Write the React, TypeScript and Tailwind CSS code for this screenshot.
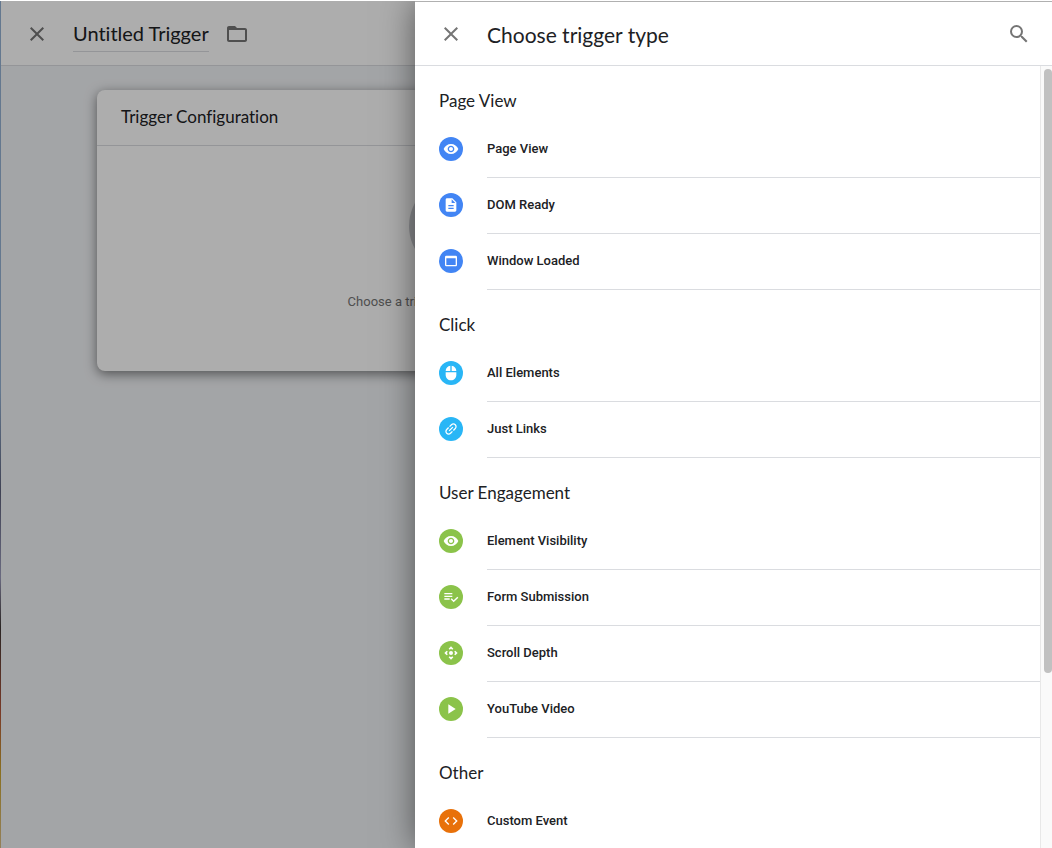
import type { ComponentType } from "react";
import {
  MdClose,
  MdCode,
  MdControlCamera,
  MdDescription,
  MdFolderOpen,
  MdLink,
  MdMouse,
  MdPlayArrow,
  MdSearch,
  MdVisibility,
  MdWebAsset,
} from "react-icons/md";

type Icon = ComponentType<{ className?: string }>;
type TriggerType = { label: string; icon: Icon; iconClass?: string };
type TriggerGroup = { title: string; color: string; items: TriggerType[] };

function FormCheckIcon({ className }: { className?: string }) {
  return (
    <svg viewBox="0 0 24 24" fill="currentColor" aria-hidden="true" className={className}>
      <path d="M14 10H2v2h12v-2zm0-4H2v2h12V6zM2 16h8v-2H2v2zm19.5-4.5L23 13l-6.99 7-4.51-4.5L13 14l3.01 3 5.49-5.5z" />
    </svg>
  );
}

const groups: TriggerGroup[] = [
  {
    title: "Page View",
    color: "bg-[#4285f4]",
    items: [
      { label: "Page View", icon: MdVisibility },
      { label: "DOM Ready", icon: MdDescription },
      { label: "Window Loaded", icon: MdWebAsset },
    ],
  },
  {
    title: "Click",
    color: "bg-[#29b6f6]",
    items: [
      { label: "All Elements", icon: MdMouse },
      { label: "Just Links", icon: MdLink, iconClass: "-rotate-45" },
    ],
  },
  {
    title: "User Engagement",
    color: "bg-[#8bc34a]",
    items: [
      { label: "Element Visibility", icon: MdVisibility },
      { label: "Form Submission", icon: FormCheckIcon },
      { label: "Scroll Depth", icon: MdControlCamera },
      { label: "YouTube Video", icon: MdPlayArrow },
    ],
  },
  {
    title: "Other",
    color: "bg-[#e8710a]",
    items: [{ label: "Custom Event", icon: MdCode }],
  },
];

function TriggerRow({ item, color }: { item: TriggerType; color: string }) {
  const Icon = item.icon;
  return (
    <li>
      <button type="button" className="flex h-14 w-full items-stretch gap-6 pl-6 text-left">
        <span className="flex items-center pb-0.5">
          <span className={`flex size-6 items-center justify-center rounded-full text-white ${color}`}>
            <Icon className={`size-4 ${item.iconClass ?? ""}`} />
          </span>
        </span>
        <span className="flex flex-1 items-center border-b border-[#dadce0] pb-0.5 text-[13px] font-medium text-[#202124]">
          {item.label}
        </span>
      </button>
    </li>
  );
}

function TriggerEditor() {
  return (
    <main className="flex h-full flex-col bg-[#f1f3f6]">
      <header className="flex h-[65px] shrink-0 items-center border-b border-[#dadce0] bg-white pt-0.5 pl-6">
        <button type="button" aria-label="Close editor" className="mr-6 text-[#757575]">
          <MdClose className="size-6" />
        </button>
        <h1 className="border-b border-[#dadce0] pb-0.5 font-['Lato',sans-serif] text-xl leading-8 text-[#202124]">
          Untitled Trigger
        </h1>
        <button type="button" aria-label="Choose folder" className="ml-4 text-[#757575]">
          <MdFolderOpen className="size-6" />
        </button>
      </header>
      <section className="mx-24 mt-6 w-[720px] rounded-lg bg-white shadow-[0_3px_12px_rgba(0,0,0,0.5)]">
        <h2 className="flex h-14 items-center border-b border-[#dadce0] px-6 pb-0.5 font-['Lato',sans-serif] text-[17px] text-[#202124]">
          Trigger Configuration
        </h2>
        <div className="flex h-[225px] flex-col items-center gap-4 pt-8">
          <div className="size-24 shrink-0 rounded-full bg-[#cccdd2]" />
          <p className="text-[13px] leading-6 text-[#757575]">Choose a trigger type to begin setup...</p>
        </div>
      </section>
    </main>
  );
}

function TriggerTypePanel() {
  return (
    <aside className="absolute inset-y-0 right-0 left-[415px] flex flex-col border-t border-[#b0b0b0] bg-white shadow-[0_0_32px_rgba(0,0,0,0.5)]">
      <header className="flex h-16 shrink-0 items-center border-b border-[#dadce0] px-6">
        <button type="button" aria-label="Close panel" className="mr-6 text-[#757575]">
          <MdClose className="size-6" />
        </button>
        <h2 className="flex-1 pt-0.5 font-['Lato',sans-serif] text-[21px] leading-8 text-[#202124]">
          Choose trigger type
        </h2>
        <button type="button" aria-label="Search" className="-mr-[3px] text-[#757575]">
          <MdSearch className="size-6" />
        </button>
      </header>
      <div className="flex min-h-0 flex-1">
        <div className="min-w-0 flex-1 overflow-y-auto [scrollbar-width:none]">
          {groups.map((group) => (
            <section key={group.title}>
              <h3 className="h-14 pt-[23px] pl-6 font-['Lato',sans-serif] text-[17px] leading-6 text-[#202124]">
                {group.title}
              </h3>
              <ul>
                {group.items.map((item) => (
                  <TriggerRow key={item.label} item={item} color={group.color} />
                ))}
              </ul>
            </section>
          ))}
        </div>
        <div aria-hidden="true" className="w-3 shrink-0 border-l border-[#e8e8e8] bg-[#fafafa] pt-[3px] pl-[3px]">
          <div className="h-[calc(100%-175px)] w-2 rounded-full bg-[#c1c1c1]" />
        </div>
      </div>
    </aside>
  );
}

export default function App() {
  return (
    <div className="relative flex h-screen flex-col overflow-hidden bg-white pt-px font-['Roboto',sans-serif] [font-variant-ligatures:none]">
      <div className="flex min-h-0 flex-1">
        <div className="w-px shrink-0 bg-[linear-gradient(to_bottom,#64788f_46%,#3f4254_58%,#6a6a80_68%,#2a2524_74%,#7a3a28_84%,#8a7020_91%,#94805a_100%)]" />
        <div className="relative min-w-0 flex-1 overflow-hidden">
          <TriggerEditor />
          <div className="absolute inset-0 bg-black/32" />
        </div>
      </div>
      <div className="pointer-events-none absolute inset-x-0 top-px bottom-0 overflow-hidden *:pointer-events-auto">
        <TriggerTypePanel />
      </div>
    </div>
  );
}
